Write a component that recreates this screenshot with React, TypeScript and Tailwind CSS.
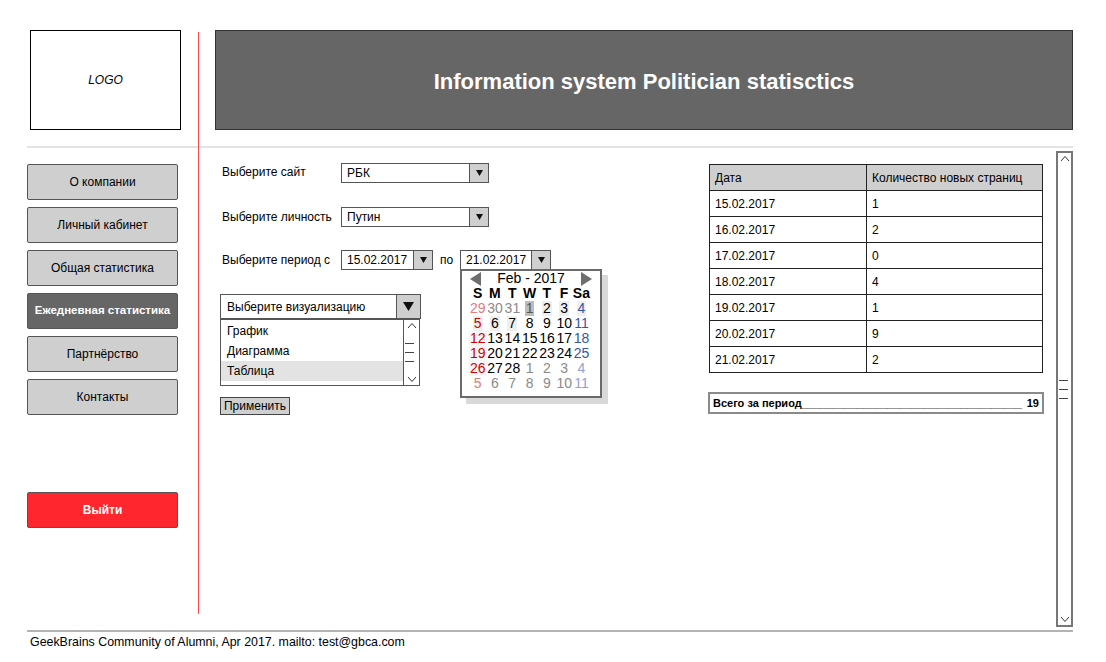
import React from "react";

const navItems = [
  { label: "О компании", active: false },
  { label: "Личный кабинет", active: false },
  { label: "Общая статистика", active: false },
  { label: "Ежедневная статистика", active: true },
  { label: "Партнёрство", active: false },
  { label: "Контакты", active: false },
];

const tableRows = [
  ["15.02.2017", "1"],
  ["16.02.2017", "2"],
  ["17.02.2017", "0"],
  ["18.02.2017", "4"],
  ["19.02.2017", "1"],
  ["20.02.2017", "9"],
  ["21.02.2017", "2"],
];

type Day = { d: number; out?: boolean; box?: "dark" | "light" | "faint" };

const calendar: Day[][] = [
  [{ d: 29, out: true }, { d: 30, out: true }, { d: 31, out: true }, { d: 1, box: "dark" }, { d: 2, box: "light" }, { d: 3, box: "light" }, { d: 4, box: "light" }],
  [{ d: 5, box: "light" }, { d: 6, box: "light" }, { d: 7, box: "light" }, { d: 8 }, { d: 9 }, { d: 10 }, { d: 11 }],
  [{ d: 12, box: "faint" }, { d: 13 }, { d: 14 }, { d: 15 }, { d: 16 }, { d: 17 }, { d: 18 }],
  [{ d: 19, box: "faint" }, { d: 20 }, { d: 21 }, { d: 22 }, { d: 23 }, { d: 24 }, { d: 25 }],
  [{ d: 26, box: "faint" }, { d: 27 }, { d: 28 }, { d: 1, out: true }, { d: 2, out: true }, { d: 3, out: true }, { d: 4, out: true }],
  [{ d: 5, out: true }, { d: 6, out: true }, { d: 7, out: true }, { d: 8, out: true }, { d: 9, out: true }, { d: 10, out: true }, { d: 11, out: true }],
];

function Arrow({ big = false }: { big?: boolean }) {
  return big ? (
    <svg width="11" height="9" viewBox="0 0 11 9">
      <polygon points="0,0 11,0 5.5,9" fill="#111" />
    </svg>
  ) : (
    <svg width="7" height="6" viewBox="0 0 7 6">
      <polygon points="0,0 7,0 3.5,6" fill="#111" />
    </svg>
  );
}

function Select({ value, width }: { value: string; width: string }) {
  return (
    <div className={`flex h-[20px] border border-[#555] bg-white ${width}`}>
      <div className="flex-1 flex items-center pl-[5px] text-[12px] leading-none">{value}</div>
      <div className="w-[19px] flex items-center justify-center bg-[#cfcfcf] border-l border-[#555]">
        <Arrow />
      </div>
    </div>
  );
}

function Calendar() {
  const color = (col: number, out?: boolean) => {
    if (col === 0) return out ? "text-[#e57a7a]" : "text-[#d10000]";
    if (col === 6) return out ? "text-[#8fa2d2]" : "text-[#3556a8]";
    return out ? "text-[#8a8a8a]" : "text-black";
  };
  const boxBg = { dark: "bg-[#bdbdbd] text-[#555]", light: "bg-[#efefef]", faint: "bg-[#f6f6f6]" };
  return (
    <div className="absolute left-0 top-[19px] w-[142px] h-[129px] bg-white border-2 border-[#6a6a6a] shadow-[6px_6px_0_#d9d9d9] font-['Liberation_Sans',Arial,sans-serif] text-[14px] leading-[15px] z-10">
      <div className="flex items-center h-[15px] pl-[8px] pr-[8px]">
        <svg width="11" height="14" viewBox="0 0 11 14">
          <polygon points="11,0 11,14 0,7" fill="#6e6e6e" />
        </svg>
        <div className="flex-1 text-center">Feb - 2017</div>
        <svg width="11" height="14" viewBox="0 0 11 14">
          <polygon points="0,0 0,14 11,7" fill="#6e6e6e" />
        </svg>
      </div>
      <div className="ml-[7px] grid grid-cols-[repeat(7,17.3px)]">
        {["S", "M", "T", "W", "T", "F", "Sa"].map((n, i) => (
          <div key={i} className="h-[15px] text-center font-bold">{n}</div>
        ))}
        {calendar.map((row, r) =>
          row.map((day, c) => (
            <div key={`${r}-${c}`} className={`h-[15px] text-center ${color(c, day.out)}`}>
              <span className={`inline-block px-[1px] ${day.box ? boxBg[day.box] : ""}`}>{day.d}</span>
            </div>
          ))
        )}
      </div>
    </div>
  );
}

function Scrollbar({ height, small = false }: { height: string; small?: boolean }) {
  return (
    <div className={`flex flex-col items-center justify-between bg-white ${height} ${small ? "w-[16px] border-l border-[#555]" : "w-[17px] border-2 border-[#777]"}`}>
      <svg width="10" height="7" viewBox="0 0 10 7" className="mt-[2px]">
        <polyline points="1,6 5,1.5 9,6" fill="none" stroke="#333" strokeWidth="1" />
      </svg>
      <div className="flex flex-col gap-[8px] self-start ml-[1px]">
        <div className="w-[9px] h-px bg-[#444]" />
        <div className="w-[9px] h-px bg-[#444]" />
        <div className="w-[9px] h-px bg-[#444]" />
      </div>
      <svg width="10" height="7" viewBox="0 0 10 7" className="mb-[2px]">
        <polyline points="1,1 5,5.5 9,1" fill="none" stroke="#333" strokeWidth="1" />
      </svg>
    </div>
  );
}

export default function App() {
  return (
    <div className="w-[1106px] h-[662px] overflow-hidden bg-white text-black font-['Liberation_Sans',Arial,sans-serif] text-[12px]">
      <div className="flex pt-[30px] pl-[27px] h-[630px]">
        {/* left column */}
        <div className="w-[171px] flex flex-col">
          <div className="ml-[3px] w-[151px] h-[100px] border border-black flex items-center justify-center text-[12px] italic">
            LOGO
          </div>
          <div className="mt-[16px] h-[2px] bg-[#e4e4e4]" />
          <nav className="mt-[16px] flex flex-col gap-[7px]">
            {navItems.map((n) => (
              <div
                key={n.label}
                className={`w-[151px] h-[36px] rounded-[2px] border border-[#555] flex items-center justify-center ${
                  n.active ? "bg-[#666] text-white font-bold text-[11.5px]" : "bg-[#cfcfcf] text-black text-[12px]"
                }`}
              >
                {n.label}
              </div>
            ))}
          </nav>
          <div className="mt-[77px] w-[151px] h-[36px] rounded-[2px] border border-[#555] bg-[#ff262d] text-white font-bold flex items-center justify-center text-[12px]">
            Выйти
          </div>
        </div>

        {/* red divider */}
        <div className="w-px h-[582px] mt-[2px] bg-[#ff4a4a]" />

        {/* right column */}
        <div className="w-[874px] flex flex-col">
          <div className="ml-[16px] w-[858px] h-[100px] bg-[#666] border border-[#333] flex items-center justify-center">
            <h1 className="text-white font-bold text-[22px] mt-[2px]">Information system Politician statisctics</h1>
          </div>
          <div className="mt-[16px] h-[2px] bg-[#e4e4e4]" />

          <div className="flex pl-[21px]">
            {/* form */}
            <div className="w-[490px] pt-[15px] flex flex-col">
              <div className="flex items-center h-[20px]">
                <div className="w-[121px] pl-[2px] -mt-[2px]">Выберите сайт</div>
                <Select value="РБК" width="w-[148px]" />
              </div>
              <div className="mt-[24px] flex items-center h-[20px]">
                <div className="w-[121px] pl-[2px]">Выберите личность</div>
                <Select value="Путин" width="w-[148px]" />
              </div>
              <div className="mt-[23px] flex items-center h-[20px]">
                <div className="w-[121px] pl-[2px]">Выберите период с</div>
                <Select value="15.02.2017" width="w-[92px]" />
                <div className="w-[27px] pl-[7px]">по</div>
                <div className="relative">
                  <Select value="21.02.2017" width="w-[91px]" />
                  <Calendar />
                </div>
              </div>

              <div className="mt-[24px] w-[201px] h-[25px] flex border border-[#555] bg-white">
                <div className="flex-1 flex items-center pl-[6px]">Выберите визуализацию</div>
                <div className="w-[24px] flex items-center justify-center bg-[#cfcfcf] border-l border-[#555]">
                  <Arrow big />
                </div>
              </div>
              <div className="w-[200px] h-[67px] flex border border-[#555] bg-white">
                <div className="flex-1 flex flex-col pt-px">
                  {["График", "Диаграмма", "Таблица"].map((o, i) => (
                    <div key={o} className={`h-[20px] flex items-center pl-[6px] ${i === 2 ? "bg-[#e3e3e3]" : ""}`}>
                      {o}
                    </div>
                  ))}
                </div>
                <Scrollbar height="h-full" small />
              </div>

              <button className="mt-[11px] w-[70px] h-[18px] border border-[#444] bg-[#cfcfcf] text-[12px] leading-none flex items-center justify-center">
                Применить
              </button>
            </div>

            {/* table */}
            <div className="w-[335px] pt-[16px] flex flex-col">
              <table className="w-[334px] border-collapse border border-[#222] text-[12px]">
                <thead>
                  <tr className="h-[26px] bg-[#cfcfcf]">
                    <th className="w-[157px] border border-[#222] text-left font-normal pl-[5px]">Дата</th>
                    <th className="border border-[#222] text-left font-normal pl-[5px]">Количество новых страниц</th>
                  </tr>
                </thead>
                <tbody>
                  {tableRows.map(([d, v]) => (
                    <tr key={d} className="h-[26px]">
                      <td className="border border-[#222] pl-[5px]">{d}</td>
                      <td className="border border-[#222] pl-[5px]">{v}</td>
                    </tr>
                  ))}
                </tbody>
              </table>
              <div className="mt-[19px] -ml-px w-[336px] h-[22px] border-2 border-[#8a8a8a] flex items-center justify-between px-[3px] text-[11px] font-bold whitespace-nowrap">
                <span>Всего за период____________________________________</span>
                <span>19</span>
              </div>
            </div>

            <div className="ml-[12px] mt-[3px]">
              <Scrollbar height="h-[476px]" />
            </div>
          </div>
        </div>
      </div>

      <footer>
        <div className="ml-[27px] w-[1046px] h-[2px] bg-[#b3b3b3]" />
        <div className="ml-[30px] mt-[3px] text-[12.4px] leading-[14px]">
          GeekBrains Community of Alumni, Apr 2017. mailto: test@gbca.com
        </div>
      </footer>
    </div>
  );
}
